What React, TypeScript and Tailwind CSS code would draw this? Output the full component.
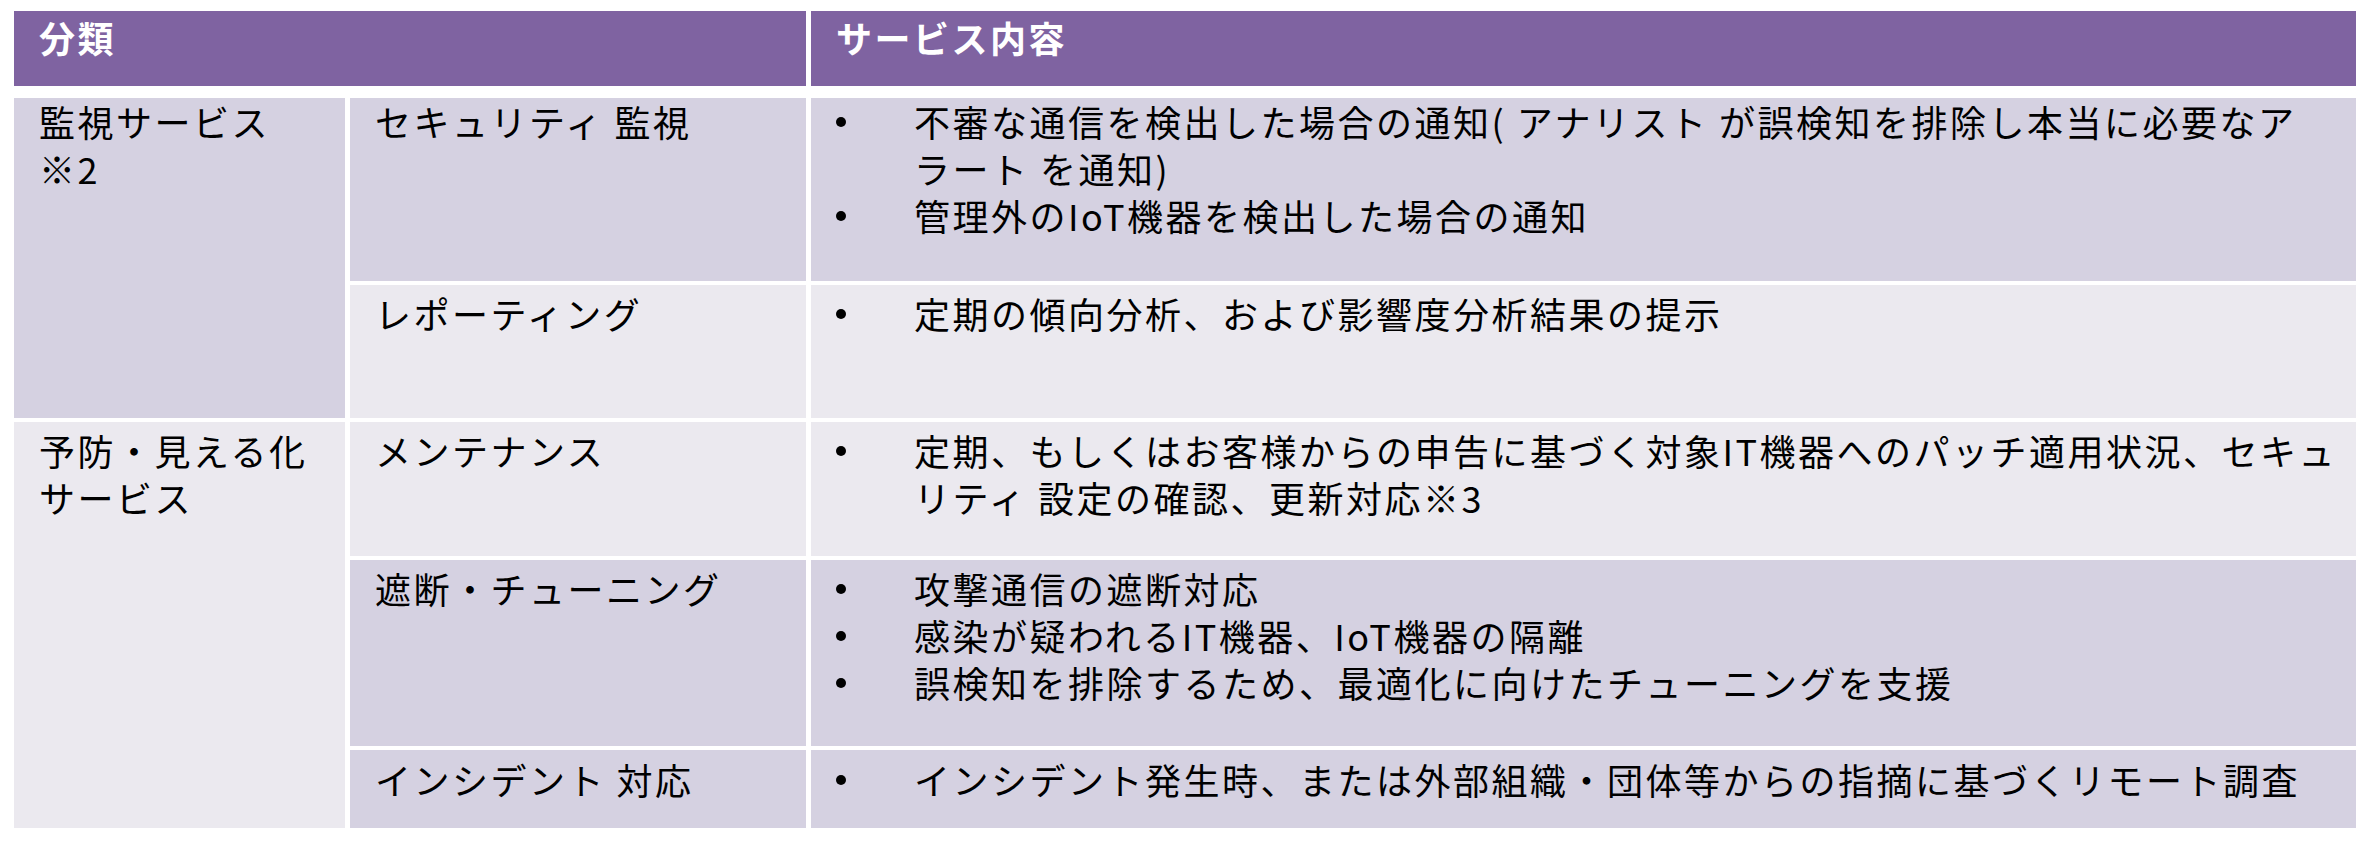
const dark = 'bg-[#d5d1e1]'
const light = 'bg-[#ebe9ef]'

function Bullets({ items }: { items: string[][] }) {
  return (
    <div className="flex flex-col">
      {items.map((lines, i) => (
        <div key={i} className="flex">
          <div className="w-[78px] shrink-0 h-[47px] flex items-center">
            <span className="block w-[10px] h-[10px] rounded-full bg-black" />
          </div>
          <div>
            {lines.map((l, j) => (
              <div key={j} className="whitespace-nowrap">{l}</div>
            ))}
          </div>
        </div>
      ))}
    </div>
  )
}

export default function App() {
  return (
    <div className="min-h-screen bg-white pt-[11px] pl-[14px] text-black font-['Noto_Sans_CJK_JP','Noto_Sans',sans-serif] text-[36px] leading-[47px] tracking-[2.5px]">
      <div className="w-[2342px]">
        {/* header */}
        <div className="grid grid-cols-[792px_1545px] gap-x-[5px] h-[75px]">
          <div className="bg-[#7f63a1] pl-[25px] pt-[3px] font-bold text-white">分類</div>
          <div className="bg-[#7f63a1] pl-[25px] pt-[3px] font-bold text-white">サービス内容</div>
        </div>

        {/* body */}
        <div className="mt-[12px] grid grid-cols-[331px_456px_1545px] grid-rows-[183px_133px_134px_186px_78px] gap-x-[5px] gap-y-[4px]">
          <div className={`${dark} row-span-2 pl-[25px]`}>
            <div>監視サービス</div>
            <div>※2</div>
          </div>
          <div className={`${dark} pl-[25px]`}>セキュリティ 監視</div>
          <div className={`${dark} pl-[25px]`}>
            <Bullets
              items={[
                ['不審な通信を検出した場合の通知( アナリスト が誤検知を排除し本当に必要なア', 'ラート を通知)'],
                ['管理外のIoT機器を検出した場合の通知'],
              ]}
            />
          </div>

          <div className={`${light} pl-[25px] pt-[5px]`}>レポーティング</div>
          <div className={`${light} pl-[25px] pt-[5px]`}>
            <Bullets items={[['定期の傾向分析、および影響度分析結果の提示']]} />
          </div>

          <div className={`${light} row-span-3 pl-[25px] pt-[5px]`}>
            <div>予防・見える化</div>
            <div>サービス</div>
          </div>
          <div className={`${light} pl-[25px] pt-[5px]`}>メンテナンス</div>
          <div className={`${light} pl-[25px] pt-[5px]`}>
            <Bullets
              items={[
                ['定期、もしくはお客様からの申告に基づく対象IT機器へのパッチ適用状況、セキュ', 'リティ 設定の確認、更新対応※3'],
              ]}
            />
          </div>

          <div className={`${dark} pl-[25px] pt-[5px]`}>遮断・チューニング</div>
          <div className={`${dark} pl-[25px] pt-[5px]`}>
            <Bullets
              items={[
                ['攻撃通信の遮断対応'],
                ['感染が疑われるIT機器、IoT機器の隔離'],
                ['誤検知を排除するため、最適化に向けたチューニングを支援'],
              ]}
            />
          </div>

          <div className={`${dark} pl-[25px] pt-[6px]`}>インシデント 対応</div>
          <div className={`${dark} pl-[25px] pt-[6px]`}>
            <Bullets items={[['インシデント発生時、または外部組織・団体等からの指摘に基づくリモート調査']]} />
          </div>
        </div>
      </div>
    </div>
  )
}
